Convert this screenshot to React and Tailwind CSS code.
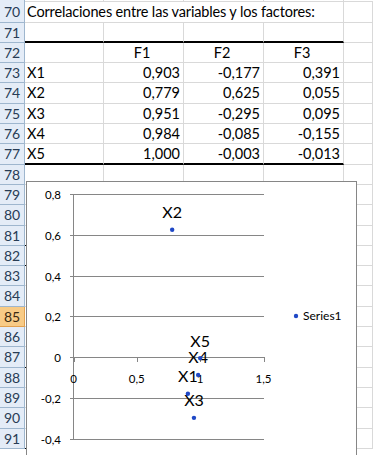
const rows = Array.from({ length: 22 }, (_, i) => 70 + i);

const table = {
  72: ['', 'F1', 'F2', 'F3'],
  73: ['X1', '0,903', '-0,177', '0,391'],
  74: ['X2', '0,779', '0,625', '0,055'],
  75: ['X3', '0,951', '-0,295', '0,095'],
  76: ['X4', '0,984', '-0,085', '-0,155'],
  77: ['X5', '1,000', '-0,003', '-0,013'],
};

const points = [
  { name: 'X1', x: 0.903, y: -0.177 },
  { name: 'X2', x: 0.779, y: 0.625 },
  { name: 'X3', x: 0.951, y: -0.295 },
  { name: 'X4', x: 0.984, y: -0.085 },
  { name: 'X5', x: 1.0, y: -0.003 },
];

// chart-relative coords (chart content box starts at 27,182)
const px = (v) => 46.5 + v * 126.67;
const py = (v) => 175.5 - v * 204.5;

const yTicks = [
  { label: '0,8', y: 12.5 },
  { label: '0,6', y: 53.5 },
  { label: '0,4', y: 94.5 },
  { label: '0,2', y: 134.5 },
  { label: '0', y: 175.5 },
  { label: '-0,2', y: 216.5 },
  { label: '-0,4', y: 257.5 },
];

const xTicks = [
  { label: '0', v: 0 },
  { label: '0,5', v: 0.5 },
  { label: '1', v: 1 },
  { label: '1,5', v: 1.5 },
];

// cells in column A with a black bottom edge peeking out next to the chart
const markedA = [81, 82, 87, 91];

function Cell({ className = '', children }) {
  return (
    <div className={`h-full shrink-0 border-r border-b border-[#d9d9d9] ${className}`}>
      {children}
    </div>
  );
}

function Chart() {
  return (
    <div className="absolute left-[26px] top-[181px] h-[300px] w-[331px] border border-[#868686] bg-white">
      <svg width="329" height="298" className="block" style={{ fontFamily: 'Lato, sans-serif' }}>
        {yTicks.map((t) => (
          <g key={t.label}>
            <line x1="43" x2="237" y1={t.y} y2={t.y} stroke="#868686" strokeWidth="1" />
            <text x="34" y={t.y + 4} fontSize="11.5" textAnchor="end" fill="#000">
              {t.label}
            </text>
          </g>
        ))}
        <line x1="46.5" x2="46.5" y1="12" y2="258" stroke="#868686" strokeWidth="1" />
        {xTicks.map((t) => (
          <g key={t.label}>
            <line x1={Math.round(px(t.v)) + 0.5} x2={Math.round(px(t.v)) + 0.5} y1="175" y2="180" stroke="#868686" />
            <text x={px(t.v)} y="201" fontSize="11.5" textAnchor="middle" fill="#000">
              {t.label}
            </text>
          </g>
        ))}
        {points.map((p) => (
          <g key={p.name}>
            <circle cx={px(p.x)} cy={py(p.y)} r="2.2" fill="#1f48c6" />
            <text x={px(p.x)} y={py(p.y) - 11.4} fontSize="16" textAnchor="middle" fill="#000">
              {p.name}
            </text>
          </g>
        ))}
        <circle cx="269" cy="134" r="2.2" fill="#1f48c6" />
        <text x="276" y="138" fontSize="12" fill="#000">
          Series1
        </text>
      </svg>
    </div>
  );
}

export default function App() {
  return (
    <div
      className="relative h-[455px] w-[373px] overflow-hidden bg-white text-[14.5px] text-black"
      style={{ fontFamily: 'Lato, "Liberation Sans", sans-serif' }}
    >
      {/* row 69 sliver */}
      <div className="flex h-[2.3px]">
        <div className="w-[25px] shrink-0 border-r border-[#9eb6ce] bg-[#e4ecf7]" />
        <div className="w-[79px] shrink-0 border-r border-[#d9d9d9]" />
        <div className="w-[80px] shrink-0 border-r border-[#d9d9d9]" />
        <div className="w-[80px] shrink-0 border-r border-[#d9d9d9]" />
        <div className="w-[80px] shrink-0 border-r border-[#d9d9d9]" />
        <div className="flex-1" />
      </div>
      <div className="-mt-px border-t border-[#d9d9d9]" />

      {rows.map((r) => {
        const cells = table[r];
        const topThick = r === 71 ? 'border-b-2 border-b-black' : '';
        const botThick = r === 77 ? 'border-b-2 border-b-black' : '';
        const thick = topThick || botThick;
        const aMark = markedA.includes(r) ? 'border-b-black' : '';
        return (
          <div key={r} className="flex h-[20.3px] items-stretch leading-[20px]">
            <div
              className={`h-full w-[25px] shrink-0 border-r border-b text-center text-[14px] ${
                r === 85
                  ? 'border-[#e2a14f] bg-[#f8cb86] text-[#3a2a10]'
                  : 'border-[#9eb6ce] bg-[#e4ecf7] text-[#283c55]'
              }`}
            >
              {r}
            </div>
            {r === 70 ? (
              <Cell className="w-[319px] whitespace-nowrap pl-[2px] tracking-[-0.15px]">
                Correlaciones entre las variables y los factores:
              </Cell>
            ) : (
              <>
                <Cell className={`w-[79px] pl-[2px] ${thick} ${aMark}`}>{cells ? cells[0] : ''}</Cell>
                <Cell className={`w-[80px] pr-[3px] ${thick} ${r === 72 ? 'text-center' : 'text-right'}`}>
                  {cells ? cells[1] : ''}
                </Cell>
                <Cell className={`w-[80px] pr-[3px] ${thick} ${r === 72 ? 'text-center' : 'text-right'}`}>
                  {cells ? cells[2] : ''}
                </Cell>
                <Cell className={`w-[80px] pr-[3px] ${thick} ${r === 72 ? 'text-center' : 'text-right'}`}>
                  {cells ? cells[3] : ''}
                </Cell>
              </>
            )}
            <Cell className="flex-1" />
          </div>
        );
      })}

      <Chart />
    </div>
  );
}
